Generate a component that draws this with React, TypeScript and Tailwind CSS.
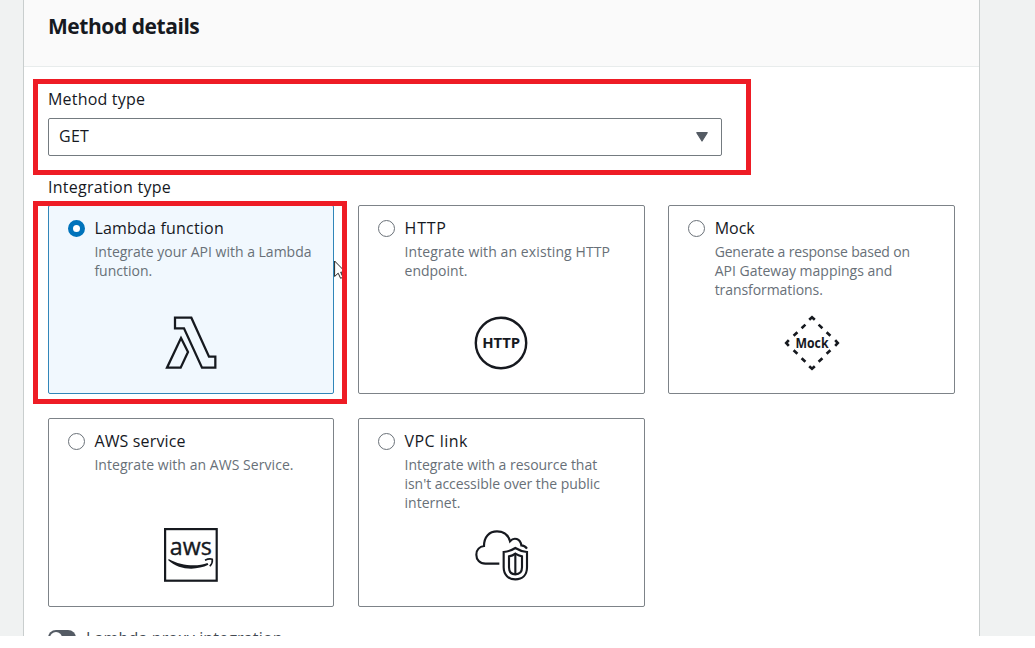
import type { ReactNode } from "react";

const ink = "#16191f";

function LambdaIcon() {
  return (
    <svg viewBox="27 33 162 162" className="h-[54px] w-[54px]" fill="none" stroke={ink} strokeWidth="6.8">
      <path d="M60 38H109L162 155H181V188H141L87 70H60Z" />
      <path d="M78 99L99 141L77 188H36Z" />
    </svg>
  );
}

function HttpIcon() {
  return (
    <svg viewBox="0 0 54 54" className="h-[54px] w-[54px]">
      <circle cx="27" cy="27" r="25.2" fill="none" stroke={ink} strokeWidth="2.4" />
      <text x="27.2" y="32.4" textAnchor="middle" textLength="38" lengthAdjust="spacingAndGlyphs" fontSize="14.5" fontWeight="700" fill={ink}>
        HTTP
      </text>
    </svg>
  );
}

function MockIcon() {
  return (
    <svg viewBox="0 0 54 54" className="h-[54px] w-[54px] overflow-visible">
      <g fill="none" stroke={ink} strokeWidth="2.6">
        <path d="M24.2 3.8L27 1.2L29.8 3.8M24.2 50.2L27 52.8L29.8 50.2M3.8 24.2L1.2 27L3.8 29.8M50.2 24.2L52.8 27L50.2 29.8" />
        <path d="M20.4 8.6L16.6 12.2M12.4 16.2L8.6 19.8M33.6 8.6L37.4 12.2M41.6 16.2L45.4 19.8M20.4 45.8L16.6 42.2M12.4 37.8L8.6 34.2M33.6 45.8L37.4 42.2M41.6 37.8L45.4 34.2" />
      </g>
      <text x="27" y="32.2" textAnchor="middle" textLength="33" lengthAdjust="spacingAndGlyphs" fontSize="13.5" fontWeight="700" fill={ink}>
        Mock
      </text>
    </svg>
  );
}

function AwsIcon() {
  return (
    <svg viewBox="0 0 54 54" className="h-[54px] w-[54px]">
      <rect x="1.1" y="1.1" width="51.6" height="51.6" fill="none" stroke={ink} strokeWidth="2.2" />
      <text
        x="26.8"
        y="27.4"
        textAnchor="middle"
        textLength="42"
        lengthAdjust="spacingAndGlyphs"
        fontSize="24.5"
        fill={ink}
        stroke={ink}
        strokeWidth=".4"
      >
        aws
      </text>
      <path d="M4.6 31C17 38 33 39 43.5 35L44.4 36.8C32 42.8 15 42.2 4.3 32.2Z" fill={ink} />
      <path d="M41 32.2C44 30.8 46.8 30.7 48.3 31.3C48.7 33.5 47.5 36.3 45.8 38.2" fill="none" stroke={ink} strokeWidth="1.6" />
    </svg>
  );
}

function VpcIcon() {
  return (
    <svg viewBox="29 24 162 162" className="h-[54px] w-[54px] overflow-visible" fill="none" stroke={ink} strokeWidth="6.4">
      <path d="M102 131H60C43 131 33 119 33 104C33 90 43 80 56 78C56 50 72 34 95 34C114 34 129 45 134 64C146 50 165 56 168 76C175 76 180 79 185 86" />
      <path d="M150 84C139 91 127 95 115 96V142C115 165 130 178 150 178C171 178 185 165 185 142V96C173 95 161 91 150 84Z" />
      <path d="M150 101C144 106 138 108 131 109V142C131 155 138 163 150 163C163 163 170 155 170 142V109C163 108 157 106 150 101Z" />
      <path d="M150 103V163" />
    </svg>
  );
}

type Line = { text: string; spacing?: string };

type Option = {
  title: string;
  titleClass: string;
  lines: Line[];
  icon: ReactNode;
  iconClass?: string;
  selected?: boolean;
};

const options: Option[] = [
  {
    title: "Lambda function",
    titleClass: "tracking-[0.2px]",
    lines: [{ text: "Integrate your API with a Lambda" }, { text: "function." }],
    icon: <LambdaIcon />,
    selected: true,
  },
  {
    title: "HTTP",
    titleClass: "tracking-[0.8px]",
    lines: [{ text: "Integrate with an existing HTTP", spacing: "tracking-[0.1px]" }, { text: "endpoint." }],
    icon: <HttpIcon />,
  },
  {
    title: "Mock",
    titleClass: "tracking-normal",
    lines: [
      { text: "Generate a response based on", spacing: "tracking-[-0.17px]" },
      { text: "API Gateway mappings and" },
      { text: "transformations.", spacing: "tracking-[-0.07px]" },
    ],
    icon: <MockIcon />,
    iconClass: "pl-px",
  },
  {
    title: "AWS service",
    titleClass: "tracking-[0.15px]",
    lines: [{ text: "Integrate with an AWS Service.", spacing: "tracking-[0.05px]" }],
    icon: <AwsIcon />,
    iconClass: "-mt-px",
  },
  {
    title: "VPC link",
    titleClass: "tracking-[0.45px]",
    lines: [
      { text: "Integrate with a resource that", spacing: "tracking-[-0.03px]" },
      { text: "isn't accessible over the public", spacing: "tracking-[-0.06px]" },
      { text: "internet." },
    ],
    icon: <VpcIcon />,
    iconClass: "-mt-px pl-px",
  },
];

function OptionCard({ title, titleClass, lines, icon, iconClass, selected }: Option) {
  return (
    <div
      className={`flex h-[189px] flex-col rounded-[2px] border ${
        selected ? "border-[#3186b9] bg-[#f1f8fe]" : "border-[#7d8388] bg-white"
      }`}
    >
      <div className="flex h-[110px] pl-[19px] pt-[11px]">
        <span
          className={`mt-[3px] h-[17px] w-[17px] shrink-0 rounded-full bg-white ${
            selected ? "border-[5.5px] border-[#0073bb]" : "border border-[#6a7178]"
          }`}
        />
        <div className="ml-[9.4px] whitespace-nowrap">
          <div className={`text-[16px] leading-[22px] text-[#16191f] ${titleClass}`}>{title}</div>
          <div className="pt-[3px] text-[14px] leading-[19px] text-[#687078]">
            {lines.map((l) => (
              <div key={l.text} className={l.spacing}>
                {l.text}
              </div>
            ))}
          </div>
        </div>
      </div>
      <div className={`flex justify-center ${iconClass ?? ""}`}>{icon}</div>
    </div>
  );
}

export default function App() {
  return (
    <div className="h-[648px] w-[1035px] overflow-hidden bg-white font-['Open_Sans',sans-serif] text-[#16191f]">
      <div className="relative h-[636px] overflow-hidden bg-[#f0f2f2] pl-[23px]">
        <main className="h-full w-[957px] border-x border-[#c9cece] bg-white">
          <header className="h-[67px] border-b border-[#e8ecec] bg-[#fafafa] pl-6 pt-[11px]">
            <h2 className="text-[21px] font-bold leading-[30px] tracking-[-0.45px]">Method details</h2>
          </header>
          <div className="pl-6 pt-[21px]">
            <div className="text-[16px] leading-[22px] tracking-[0.2px]">Method type</div>
            <div className="mt-2 flex h-[38px] w-[674px] items-center justify-between rounded-[2px] border border-[#747b80] pl-[10px] pr-[13px]">
              <span className="-mt-[2px] text-[16px] leading-[22px] tracking-[0.3px]">GET</span>
              <svg viewBox="0 0 12 10" className="h-[10px] w-3">
                <path d="M.8 .7H11.2L6 9Z" fill="#545b64" stroke="#545b64" strokeWidth="1.2" strokeLinejoin="round" />
              </svg>
            </div>
            <div className="mt-[20px] text-[16px] leading-[22px] tracking-[0.25px]">Integration type</div>
            <div className="mt-[7px] grid w-[906.7px] grid-cols-3 gap-x-[23.75px] gap-y-6">
              {options.map((o) => (
                <OptionCard key={o.title} {...o} />
              ))}
            </div>
            <div className="mt-5 flex">
              <span className="mt-[3px] flex h-4 w-7 rounded-full bg-[#545b64] p-[2px]">
                <span className="h-3 w-3 rounded-full bg-white" />
              </span>
              <span className="ml-[10px] whitespace-nowrap text-[16px] leading-[22px] tracking-[0.15px] text-[#414750]">
                Lambda proxy integration
              </span>
            </div>
          </div>
        </main>
        <svg viewBox="0 0 12 19" className="absolute left-[334px] top-[260px] h-[19px] w-3">
          <path d="M.6 1V16.5L4.2 13.2L6.6 18.3L9 17.2L6.7 12.2H11.6Z" fill="#fff" stroke="#222" strokeWidth="1" />
        </svg>
        <div className="absolute left-[33px] top-[79px] h-24 w-[718px] border-[5px] border-[#ee1c25]" />
        <div className="absolute left-[33px] top-[201px] h-[203px] w-[314px] border-[5px] border-[#ee1c25]" />
      </div>
    </div>
  );
}
